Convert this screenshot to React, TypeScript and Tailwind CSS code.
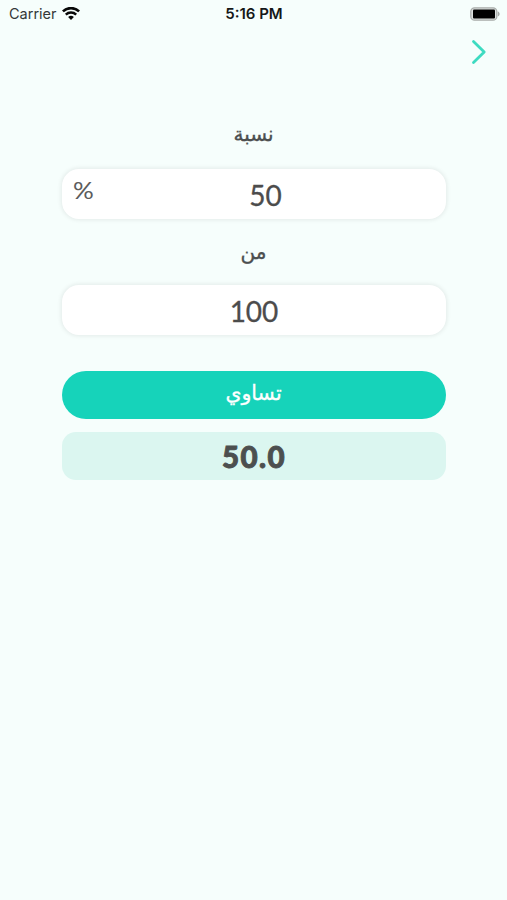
import type { ReactNode } from "react";

function StatusBar() {
  return (
    <header className="grid h-7 grid-cols-3 items-center pl-[9px] pr-[7px] font-['Inter','Liberation_Sans',sans-serif] text-[14.5px] leading-none">
      <div className="flex items-center gap-[5px]">
        <span className="text-[#333838]">Carrier</span>
        <svg width="18" height="14" viewBox="0 0 18 14" fill="none" stroke="#080808">
          <path d="M0.9 4.4a11.6 11.6 0 0 1 16.2 0" strokeWidth="2.6" />
          <path d="M3.8 7.6a7.5 7.5 0 0 1 10.4 0" strokeWidth="2.4" />
          <path d="M9 13 6.1 10.1a4.1 4.1 0 0 1 5.8 0Z" fill="#080808" stroke="none" />
        </svg>
      </div>
      <span className="whitespace-nowrap pb-0.5 pr-px text-center text-[15px] font-semibold text-[#151818]">5:16 PM</span>
      <svg className="justify-self-end" width="30" height="14" viewBox="0 0 30 14">
        <rect x="0.8" y="0.8" width="26" height="12.4" rx="3.8" fill="#dde1df" stroke="#a9adab" strokeWidth="1.3" />
        <rect x="3" y="2.6" width="22" height="8.8" rx="1" fill="#000" />
        <path d="M27.8 4.6c2.4.6 2.4 4.2 0 4.8Z" fill="#a5a9a7" />
      </svg>
    </header>
  );
}

function Label({ children }: { children: ReactNode }) {
  return (
    <p
      dir="rtl"
      className="pt-px text-center font-['DejaVu_Sans',sans-serif] text-[20px] leading-8 text-[#4c4f4f] [-webkit-text-stroke:0.35px_#4c4f4f]"
    >
      {children}
    </p>
  );
}

function Field({ value, unit }: { value: string; unit?: string }) {
  return (
    <div className="relative flex h-[50px] items-center justify-center rounded-[17px] bg-white pt-px font-['Lato',sans-serif] text-[28px] text-[#4c4c4c] shadow-[0_0_4px_1px_rgba(0,0,0,0.08)]">
      {unit && (
        <span className="absolute left-[11px] top-[7px] origin-left scale-x-[1.08] text-[24px] leading-7 text-[#5c5c5c]">
          {unit}
        </span>
      )}
      <span className={unit ? "pl-6 [-webkit-text-stroke:0.3px_#4c4c4c]" : "pl-px [-webkit-text-stroke:0.3px_#4c4c4c]"}>
        {value}
      </span>
    </div>
  );
}

export default function App() {
  return (
    <div className="h-[900px] w-[507px] overflow-hidden bg-[#f6fefc]">
      <StatusBar />

      <nav className="flex h-12 items-center justify-end pr-[20px]">
        <svg width="16" height="26" viewBox="0 0 16 26" fill="none" stroke="#3edbc1" strokeWidth="2.8" strokeLinecap="round" strokeLinejoin="round">
          <path d="M2.5 2.5 13.2 13 2.5 23.5" />
        </svg>
      </nav>

      <main className="mx-auto flex w-96 flex-col pt-[41px]">
        <Label>نسبة</Label>
        <div className="mt-[19px]">
          <Field value="50" unit="%" />
        </div>
        <div className="mt-4">
          <Label>من</Label>
        </div>
        <div className="mt-[17px]">
          <Field value="100" />
        </div>

        <button
          dir="rtl"
          className="mt-9 h-[48px] rounded-full bg-[#16d3ba] pb-1 font-['DejaVu_Sans',sans-serif] text-[20.5px] leading-8 text-white [-webkit-text-stroke:0.3px_#fff]"
        >
          تساوي
        </button>
        <div className="mt-[13px] flex h-12 items-center justify-center rounded-[14px] bg-[#dbf6f0] pl-px pt-[3px] font-['Lato',sans-serif] text-[29.5px] font-black tracking-[1.4px] text-[#4c4f4f] [-webkit-text-stroke:0.9px_#4c4f4f]">
          50.0
        </div>
      </main>
    </div>
  );
}
